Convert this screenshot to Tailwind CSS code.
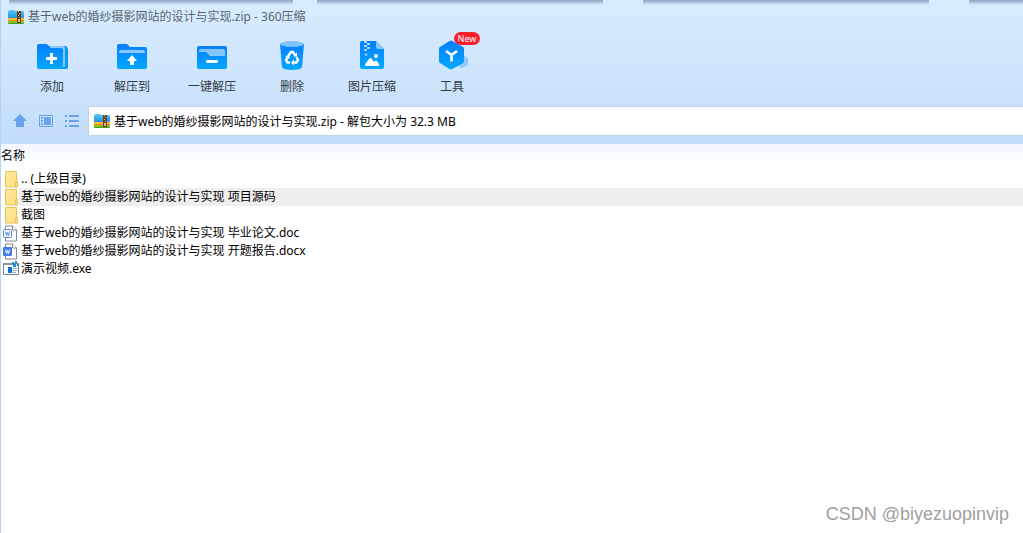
<!DOCTYPE html>
<html lang="zh-CN">
<head>
<meta charset="utf-8">
<meta name="viewport" content="width=device-width, initial-scale=1">
<title>基于web的婚纱摄影网站的设计与实现.zip - 360压缩</title>
<script src="https://cdn.jsdelivr.net/npm/@tailwindcss/browser@4"></script>
</head>
<body class="relative flex min-h-screen flex-col border-l border-[#b5d3f2] bg-white font-['Noto_Sans','Noto_Sans_CJK_SC',sans-serif] text-[12px] leading-[18px] text-black">

<!-- Shared symbols -->
<svg class="absolute size-0" aria-hidden="true">
  <defs>
    <linearGradient id="blue" x1="0" y1="0" x2="0" y2="1"><stop offset="0" stop-color="#087fff"/><stop offset="1" stop-color="#00a8ff"/></linearGradient>
    <linearGradient id="sky" x1="0" y1="0" x2="0" y2="1"><stop offset="0" stop-color="#59ccf7"/><stop offset="1" stop-color="#168ee0"/></linearGradient>
    <linearGradient id="yellow" x1="0" y1="0" x2="1" y2="1"><stop offset="0" stop-color="#ffea9f"/><stop offset="1" stop-color="#ffdc78"/></linearGradient>
    <symbol id="zip" viewBox="0 0 16 16">
      <path d="M0 3l1-2h5l1 1h8l1 1v7H0z" fill="url(#sky)"/>
      <path d="M0 9h16v2H0z" fill="#ffbd2e"/>
      <path d="M0 11h16v1H0z" fill="#f68b19"/>
      <path d="M0 12h16v2l-1 1H1l-1-1z" fill="#7bc62c"/>
      <path d="M0 14h16l-1 1H1z" fill="#4d9e20"/>
      <path d="M9 2h4v12H9z" fill="#70391c"/>
      <path d="M10 2h1v1h-1zM11 4h1v1h-1zM10 6h1v1h-1zM11 8h1v1h-1zM10 10h2v3h-2z" fill="#e6b86d"/>
    </symbol>
    <symbol id="folder" viewBox="0 0 14 17">
      <path d="M1.500 .5h11v10h1v5.500h-12z" fill="url(#yellow)" stroke="#e5c260"/>
      <path d="M11.500 16v-5h2v5z" fill="#ffe07f" stroke="#e5c260"/>
    </symbol>
    <symbol id="page" viewBox="0 0 14 17">
      <path d="M2.500 1h7l4 4v11h-11z" fill="#fff" stroke="#818892"/>
      <path d="M9.500 1v4h4" fill="#fff" stroke="#818892"/>
    </symbol>
  </defs>
</svg>

<header class="bg-linear-to-b from-[#d8ecff] via-[#cfe5fd] to-[#c2ddf9]">
  <!-- Shadows cast by the windows behind the title bar -->
  <div class="absolute inset-x-0 top-0 flex h-[5px] gap-6 overflow-hidden" aria-hidden="true">
    <i class="ml-2 w-[284px] shrink-0 bg-linear-to-b from-[#8ba6c1] to-[#d8ecff]/0"></i>
    <i class="w-[286px] shrink-0 bg-linear-to-b from-[#8ba6c1] to-[#d8ecff]/0"></i>
    <i class="ml-4 w-[286px] shrink-0 bg-linear-to-b from-[#8ba6c1] to-[#d8ecff]/0"></i>
    <i class="ml-4 grow bg-linear-to-b from-[#8ba6c1] to-[#d8ecff]/0"></i>
  </div>

  <div class="flex h-8 items-center gap-1 pt-[2px] pl-[7px] text-[#5c6670]">
    <svg class="size-4" aria-hidden="true"><use href="#zip"/></svg>
    <h1>基于web的婚纱摄影网站的设计与实现.zip - 360压缩</h1>
  </div>

  <nav class="flex h-[74px] pl-[11px] text-[#333b44]" aria-label="工具栏">
    <button class="flex w-20 flex-col items-center gap-[6px] pt-2">
      <svg class="h-8 w-9" viewBox="0 0 36 32" aria-hidden="true">
        <path d="M14 6h17q2 0 2 2v21H14z" fill="#087fff"/>
        <path d="M16 6h13q2 0 2 2v20h-2V9H16z" fill="#88c7ff"/>
        <path d="M3 6q0-2 2-2h8l3 4h11q2 0 2 2v19H5q-2 0-2-2z" fill="url(#blue)"/>
        <path d="M31 8h2q1 0 1 2v17q0 2-2 2h-3v-2h2z" fill="#0798ff"/>
        <path d="M16 13h3v4h4v3h-4v4h-3v-4h-4v-3h4z" fill="#fff"/>
      </svg>
      添加
    </button>
    <button class="flex w-20 flex-col items-center gap-[6px] pt-2">
      <svg class="h-8 w-9" viewBox="0 0 36 32" aria-hidden="true">
        <path d="M3 6q0-2 2-2h8l3 3h15q2 0 2 2v18q0 2-2 2H5q-2 0-2-2z" fill="url(#blue)"/>
        <path d="M5 12q0-2 2-2h22q2 0 2 2v1H5z" fill="#88c7ff"/>
        <path d="M18 15l5 6h-3v4h-4v-4h-3z" fill="#fff"/>
      </svg>
      解压到
    </button>
    <button class="flex w-20 flex-col items-center gap-[6px] pt-2">
      <svg class="h-8 w-9" viewBox="0 0 36 32" aria-hidden="true">
        <rect x="3" y="6" width="30" height="23" rx="2" fill="url(#blue)"/>
        <path d="M5 11q0-2 2-2h22q2 0 2 2v5H16l-4-4H5z" fill="#83c5ff"/>
        <rect x="12" y="20" width="12" height="3" rx="1" fill="#fff"/>
      </svg>
      一键解压
    </button>
    <button class="flex w-20 flex-col items-center gap-[6px] pt-2">
      <svg class="h-8 w-9" viewBox="0 0 36 32" aria-hidden="true">
        <path d="M6 4h24l-2 23q-1 3-10 3T8 27z" fill="url(#blue)"/>
        <ellipse cx="18" cy="4" rx="12" ry="3" fill="#7fc3ff"/>
        <g fill="none" stroke="#fff" stroke-width="2.500">
          <path d="M14.500 15.500l2.500-3.500h2l2 3"/>
          <path d="M22.500 17l1.500 3-1.500 2.500h-4"/>
          <path d="M16 22.500h-2.500L12 20l1.500-2.500"/>
        </g>
        <path d="M23 12.500v4h-4zM20 19.500v6l-3-3zM11 16l4-1 1 4z" fill="#fff"/>
      </svg>
      删除
    </button>
    <button class="flex w-20 flex-col items-center gap-[6px] pt-2">
      <svg class="h-8 w-9" viewBox="0 0 36 32" aria-hidden="true">
        <path d="M6 3q0-2 2-2h14l8 8v18q0 2-2 2H8q-2 0-2-2z" fill="url(#blue)"/>
        <path d="M22 1l8 8h-6q-2 0-2-2z" fill="#87c7ff"/>
        <path d="M10 1h3v2h-3zM13 3h3v2h-3zM10 5h3v2h-3zM13 7h3v2h-3zM10 9h3v2h-3z" fill="#a7d6ff"/>
        <circle cx="12" cy="14.500" r="1.500" fill="#79c2ff"/>
        <circle cx="22" cy="16" r="2" fill="#fff"/>
        <path d="M11 25q0-1 1-2l3-4q1.500-2 3 0l2 3 1-1q1-1 2 0l2 3q1 2-1 2H12q-1 0-1-1z" fill="#fff"/>
      </svg>
      图片压缩
    </button>
    <button class="relative flex w-20 flex-col items-center gap-[6px] pt-2">
      <svg class="h-8 w-9" viewBox="0 0 36 32" aria-hidden="true">
        <path d="M29 15l5 3v7l-6 3-6-3v-4z" fill="#8ec9ff"/>
        <path d="M15.500 1q1.500-.8 3 0L29 7q1 .6 1 2v12q0 1.400-1 2l-10.500 6q-1.500.8-3 0L6 23q-1-.6-1-2V9q0-1.400 1-2z" fill="url(#blue)"/>
        <path d="M12 11l5.500 4L23 11M17.500 15v6.500" fill="none" stroke="#fff" stroke-width="2.500"/>
      </svg>
      工具
      <span class="absolute top-0 right-3 h-[13px] w-[26px] rounded-full bg-[#fb1f2c] text-center text-[9px] leading-[13px] text-white">New</span>
    </button>
  </nav>

  <div class="flex items-center pb-2">
    <div class="flex w-[87px] shrink-0 items-center gap-[10px] pl-[11px]">
      <button aria-label="上级目录"><svg class="size-4" viewBox="0 0 16 16" aria-hidden="true"><path d="M8 1l7 7h-3v6H4V8H1z" fill="#68a3ec"/></svg></button>
      <button aria-label="预览"><svg class="size-4" viewBox="0 0 16 16" aria-hidden="true"><path d="M1.500 2.500h13v11h-13z" fill="none" stroke="#68a3ec"/><path d="M3 4h2v2H3zM3 7h2v2H3zM3 10h2v2H3zM6 4h7v8H6z" fill="#68a3ec"/></svg></button>
      <button aria-label="列表"><svg class="size-4" viewBox="0 0 16 16" aria-hidden="true"><path d="M1 2h2v2H1zM5 2h10v2H5zM1 7h2v2H1zM5 7h10v2H5zM1 12h2v2H1zM5 12h10v2H5z" fill="#68a3ec"/></svg></button>
    </div>
    <div class="flex h-[30px] grow items-center gap-1 border border-r-0 border-[#b9d5f1] bg-white pl-[5px]">
      <svg class="size-4 shrink-0" aria-hidden="true"><use href="#zip"/></svg>
      <input class="h-6 min-w-0 grow bg-transparent outline-none" type="text" aria-label="路径" value="基于web的婚纱摄影网站的设计与实现.zip - 解包大小为 32.3 MB">
    </div>
  </div>
</header>

<main class="grow">
  <table class="w-full border-collapse text-left">
    <thead>
      <tr class="bg-linear-to-b from-[#f2f8ff] to-white"><th class="h-[26px] p-0 pb-[2px] font-normal" colspan="2" scope="col">名称</th></tr>
    </thead>
    <tbody>
      <tr class="h-[18px]"><td class="w-[18px] p-0"><svg class="ml-[3px] h-[17px] w-[14px]" aria-hidden="true"><use href="#folder"/></svg></td><td class="p-0 pl-[2px]">.. (上级目录)</td></tr>
      <tr class="h-[18px]"><td class="w-[18px] p-0"><svg class="ml-[3px] h-[17px] w-[14px]" aria-hidden="true"><use href="#folder"/></svg></td><td class="bg-[#efefef] p-0 pl-[2px]">基于web的婚纱摄影网站的设计与实现 项目源码</td></tr>
      <tr class="h-[18px]"><td class="w-[18px] p-0"><svg class="ml-[3px] h-[17px] w-[14px]" aria-hidden="true"><use href="#folder"/></svg></td><td class="p-0 pl-[2px]">截图</td></tr>
      <tr class="h-[18px]"><td class="w-[18px] p-0">
        <svg class="ml-[2px] h-[17px] w-[14px]" viewBox="0 0 14 17" aria-hidden="true"><use href="#page"/><rect x=".5" y="4.500" width="8" height="8" rx="1" fill="#fff" stroke="#4a86e8"/><path d="M2.500 6.500l1 4 1-3 1 3 1-4" fill="none" stroke="#4a86e8"/></svg>
      </td><td class="p-0 pl-[2px]">基于web的婚纱摄影网站的设计与实现 毕业论文.doc</td></tr>
      <tr class="h-[18px]"><td class="w-[18px] p-0">
        <svg class="ml-[2px] h-[17px] w-[14px]" viewBox="0 0 14 17" aria-hidden="true"><use href="#page"/><rect y="4" width="9" height="9" rx="1" fill="#437ee8"/><path d="M2.500 6.500l1 4 1-3 1 3 1-4" fill="none" stroke="#fff"/></svg>
      </td><td class="p-0 pl-[2px]">基于web的婚纱摄影网站的设计与实现 开题报告.docx</td></tr>
      <tr class="h-[18px]"><td class="w-[18px] p-0">
        <svg class="ml-[2px] h-[17px] w-4" viewBox="0 0 16 17" aria-hidden="true"><path d="M.5 2.500h15v11H.5z" fill="#fff" stroke="#7b8087"/><path d="M1 2h9v2H1z" fill="#8b9299"/><path d="M5 6h4v6H5z" fill="#0877d2"/><path d="M10 7.500h4M10 9.500h4M10 11.500h3" stroke="#8ba9c5"/><path d="M9 1h2v2H9zM12 0h2v2h-2zM10 3h3v3h-3zM14 3h2v2h-2z" fill="#168ddc"/></svg>
      </td><td class="p-0 pl-[2px]">演示视频.exe</td></tr>
    </tbody>
  </table>
</main>

<p class="absolute right-[14px] bottom-[7px] font-['Liberation_Sans',sans-serif] text-[18px] leading-6 text-[#a0a0a0]">CSDN @biyezuopinvip</p>
</body>
</html>
